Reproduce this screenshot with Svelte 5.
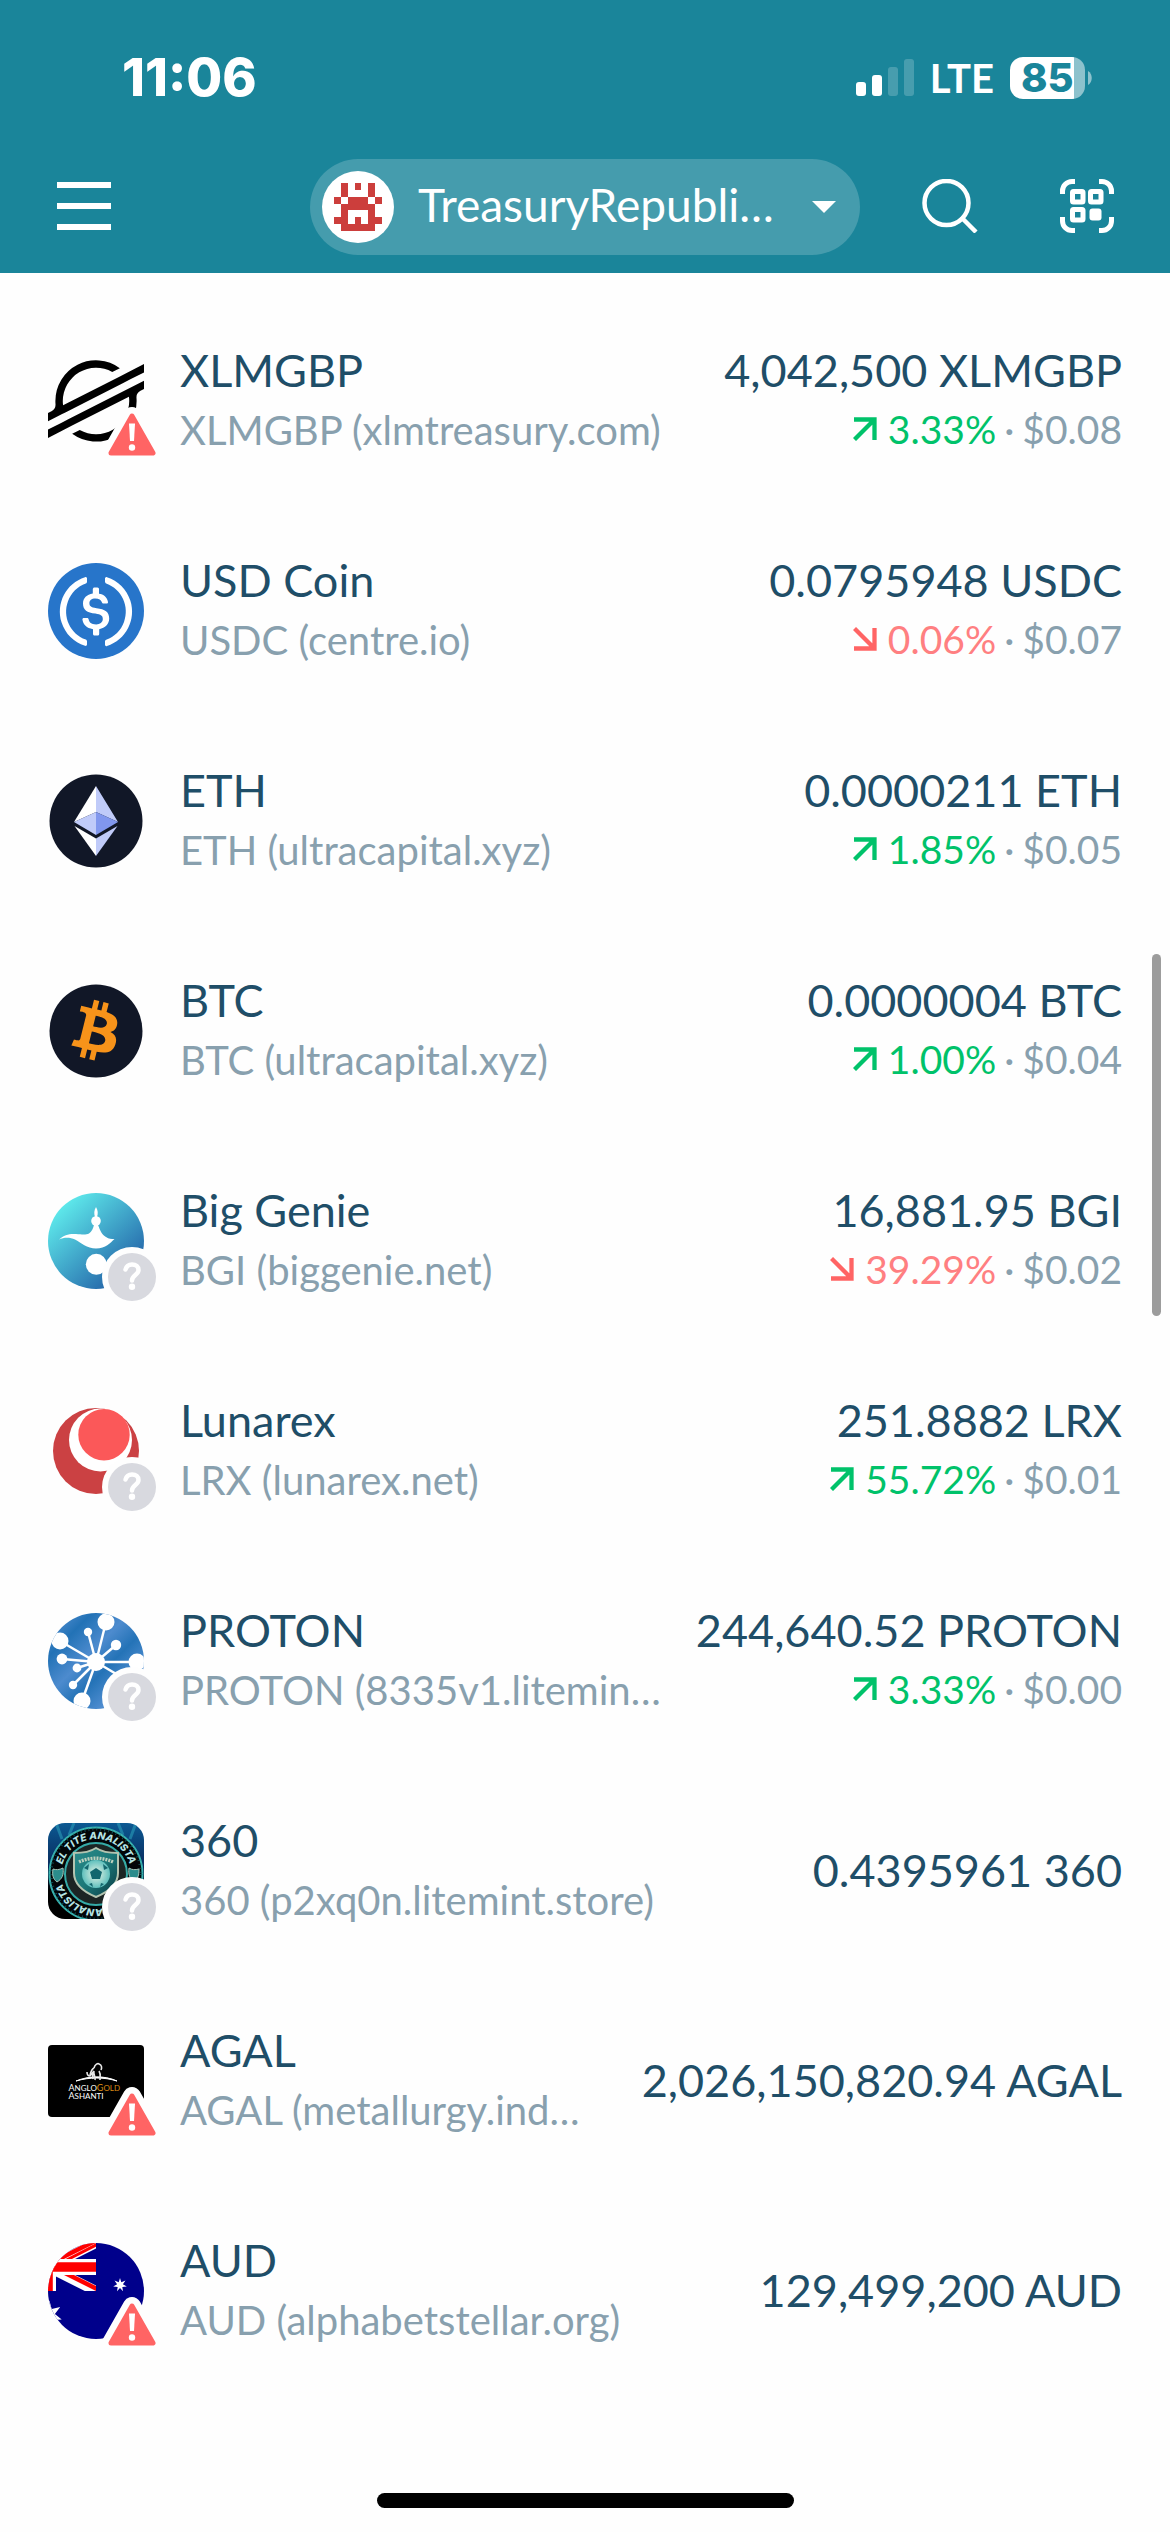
<script>
  const assets = [
    { icon: 'xlm', name: 'XLMGBP', sub: 'XLMGBP (xlmtreasury.com)', amount: '4,042,500 XLMGBP', dir: 'up', change: '3.33%', value: '$0.08', badge: 'warn' },
    { icon: 'usdc', name: 'USD Coin', sub: 'USDC (centre.io)', amount: '0.0795948 USDC', dir: 'down', change: '0.06%', value: '$0.07' },
    { icon: 'eth', name: 'ETH', sub: 'ETH (ultracapital.xyz)', amount: '0.0000211 ETH', dir: 'up', change: '1.85%', value: '$0.05' },
    { icon: 'btc', name: 'BTC', sub: 'BTC (ultracapital.xyz)', amount: '0.0000004 BTC', dir: 'up', change: '1.00%', value: '$0.04' },
    { icon: 'genie', name: 'Big Genie', sub: 'BGI (biggenie.net)', amount: '16,881.95 BGI', dir: 'down', change: '39.29%', value: '$0.02', badge: 'unknown' },
    { icon: 'lunarex', name: 'Lunarex', sub: 'LRX (lunarex.net)', amount: '251.8882 LRX', dir: 'up', change: '55.72%', value: '$0.01', badge: 'unknown' },
    { icon: 'proton', name: 'PROTON', sub: 'PROTON (8335v1.litemin…', amount: '244,640.52 PROTON', dir: 'up', change: '3.33%', value: '$0.00', badge: 'unknown' },
    { icon: 'shield', name: '360', sub: '360 (p2xq0n.litemint.store)', amount: '0.4395961 360', badge: 'unknown' },
    { icon: 'gold', name: 'AGAL', sub: 'AGAL (metallurgy.ind…', amount: '2,026,150,820.94 AGAL', badge: 'warn' },
    { icon: 'aud', name: 'AUD', sub: 'AUD (alphabetstellar.org)', amount: '129,499,200 AUD', badge: 'warn' }
  ];

  // Identicon, seven cells square
  const identicon = ['0101010', '0100010', '1011101', '0111110', '0100010', '1101011', '0111110'];
  const cells = identicon.flatMap((row, y) => [...row].flatMap((c, x) => (c === '1' ? [{ x, y }] : [])));

  // Satellites around the PROTON nucleus: x, y, radius
  const nodes = [
    [58, 9, 8.5], [40, 19, 4.2], [68, 32, 5.2], [12, 28, 8.5], [14, 46, 5.4],
    [29, 55, 4.4], [25, 72, 4.2], [34, 88, 8.5], [89, 49, 8.5], [80, 68, 6]
  ];

  function star(cx, cy, outer, inner, turn = 0) {
    return Array.from({ length: 14 }, (_, i) => {
      const r = i % 2 ? inner : outer;
      const a = (Math.PI * i) / 7 - Math.PI / 2 + turn;
      return `${(cx + r * Math.cos(a)).toFixed(1)},${(cy + r * Math.sin(a)).toFixed(1)}`;
    }).join(' ');
  }
</script>

{#snippet logo(kind)}
  <svg class="logo" viewBox="0 0 96 96" aria-hidden="true">
    {#if kind === 'xlm'}
      <svg y="7" width="96" height="82" viewBox="0 0 236.36 200">
        <path d="M203,26.16l-28.46,14.5-137.43,70a82.49,82.49,0,0,1-.7-10.69A81.87,81.87,0,0,1,158.2,28.6l16.29-8.3,2.43-1.24A100,100,0,0,0,18.18,100q0,3.82.29,7.61a18.19,18.19,0,0,1-9.88,17.58L0,129.57V150l25.29-12.89,8.19-4.18,8.07-4.11L186.43,55l16.28-8.29,33.65-17.15V9.14Z" />
        <path d="M236.36,50,49.78,145,33.5,153.31,0,170.38v20.41l33.27-16.95,28.46-14.5L199.3,89.24A83.45,83.45,0,0,1,200,100,81.87,81.87,0,0,1,78.09,171.36l-1,.53-17.66,9A100,100,0,0,0,218.18,100c0-2.57-.1-5.14-.29-7.68a18.2,18.2,0,0,1,9.87-17.58l8.6-4.38Z" />
      </svg>
    {:else if kind === 'usdc'}
      <svg width="96" height="96" viewBox="0 0 2000 2000">
        <circle cx="1000" cy="1000" r="1000" fill="#2775ca" />
        <path fill="#fff" d="M1275 1158.33c0-145.83-87.5-195.83-262.5-216.66-125-16.67-150-50-150-108.34s41.67-95.83 125-95.83c75 0 116.67 25 137.5 87.5 4.17 12.5 16.67 20.83 29.17 20.83h66.66c16.67 0 29.17-12.5 29.17-29.16v-4.17c-16.67-91.67-91.67-162.5-187.5-170.83v-100c0-16.67-12.5-29.17-33.33-33.34h-62.5c-16.67 0-29.17 12.5-33.34 33.34v95.83c-125 16.67-204.16 100-204.16 204.17 0 137.5 83.33 191.66 258.33 212.5 116.67 20.83 154.17 45.83 154.17 112.5s-58.34 112.5-137.5 112.5c-108.34 0-145.84-45.84-158.34-108.34-4.16-16.66-16.66-25-29.16-25h-70.84c-16.66 0-29.16 12.5-29.16 29.17v4.17c16.66 104.16 83.33 179.16 220.83 200v100c0 16.66 12.5 29.16 33.33 33.33h62.5c16.67 0 29.17-12.5 33.34-33.33v-100c125-20.84 208.33-108.34 208.33-220.84z" />
        <path fill="#fff" d="M787.5 1595.83c-325-116.66-491.67-479.16-370.83-800 62.5-175 200-308.33 370.83-370.83 16.67-8.33 25-20.83 25-41.67V325c0-16.67-8.33-29.17-25-33.33-4.17 0-12.5 0-16.67 4.16-395.83 125-612.5 545.84-487.5 941.67 75 233.33 254.17 412.5 487.5 487.5 16.67 8.33 33.34 0 37.5-16.67 4.17-4.16 4.17-8.33 4.17-16.66v-58.34c0-12.5-12.5-29.16-25-37.5zM1229.17 295.83c-16.67-8.33-33.34 0-37.5 16.67-4.17 4.17-4.17 8.33-4.17 16.67v58.33c0 16.67 12.5 33.33 25 41.67 325 116.66 491.67 479.16 370.83 800-62.5 175-200 308.33-370.83 370.83-16.67 8.33-25 20.83-25 41.67V1700c0 16.67 8.33 29.17 25 33.33 4.17 0 12.5 0 16.67-4.16 395.83-125 612.5-545.84 487.5-941.67-75-237.5-258.34-416.67-487.5-491.67z" />
      </svg>
    {:else if kind === 'eth'}
      <circle cx="48" cy="48" r="46.5" fill="#111727" />
      <path fill="#fff" d="M48 13 26 49l22-10z" />
      <path fill="#c0cbf9" d="M48 13v26l22 10zM48 39 26 49l22 13z" />
      <path fill="#8197ee" d="M48 39v23l22-13z" />
      <path fill="#fff" d="M26.500 53 48 65.500V83z" />
      <path fill="#c0cbf9" d="M69.500 53 48 65.500V83z" />
    {:else if kind === 'btc'}
      <circle cx="48" cy="48" r="46.5" fill="#111727" />
      <svg width="96" height="96" viewBox="0 0 64 64">
        <path fill="#f7931a" d="M46.103 27.444c.637-4.258-2.605-6.547-7.038-8.074l1.438-5.768-3.511-.875-1.4 5.616c-.923-.23-1.871-.447-2.813-.662l1.41-5.653-3.509-.875-1.439 5.766c-.764-.174-1.514-.346-2.242-.527l.004-.018-4.842-1.209-.934 3.75s2.605.597 2.55.634c1.422.355 1.679 1.296 1.636 2.042l-1.638 6.571-2.302 9.230c-.174.432-.615 1.080-1.609.834.035.051-2.552-.637-2.552-.637l-1.743 4.019 4.569 1.139c.85.213 1.683.436 2.503.646l-1.453 5.834 3.507.875 1.439-5.772c.958.26 1.888.5 2.798.726l-1.434 5.745 3.511.875 1.453-5.823c5.987 1.133 10.489.676 12.384-4.739 1.527-4.36-.076-6.875-3.226-8.515 2.294-.529 4.022-2.038 4.483-5.155zM38.081 38.693c-1.085 4.36-8.426 2.003-10.806 1.412l1.928-7.729c2.38.594 10.012 1.77 8.878 6.317zm1.086-11.312c-.99 3.966-7.1 1.951-9.082 1.457l1.748-7.01c1.982.494 8.365 1.416 7.334 5.553z" />
      </svg>
    {:else if kind === 'genie'}
      <defs>
        <linearGradient id="genie-sky" x1="0.15" y1="0.15" x2="0.8" y2="0.85">
          <stop offset="0" stop-color="#5de7ea" />
          <stop offset="1" stop-color="#2567aa" />
        </linearGradient>
      </defs>
      <circle cx="48" cy="48" r="48" fill="url(#genie-sky)" />
      <g fill="#fff">
        <path d="M48 14c2 3 2.200 7 1 10h-2c-1.200-3-1-7 1-10z" />
        <circle cx="48" cy="28" r="4.800" />
        <path d="M46 32h4c2 5 4 10 8 12 3 2 5 2 8.500 2C62 50 58 55.500 48 55.500c-9 0-15-6-21-9-5-2.500-11-2.500-16 0 5-5 11-6 17-5.500 6 .500 10 1 13-.500 3-2 4-5 5-8.500z" />
        <circle cx="48.300" cy="71.300" r="10.500" />
      </g>
    {:else if kind === 'lunarex'}
      <circle cx="48" cy="48" r="43" fill="#cb4143" />
      <circle cx="52.500" cy="37" r="31.500" fill="#fff" />
      <circle cx="56" cy="31.700" r="25.700" fill="#fb5859" />
    {:else if kind === 'proton'}
      <defs>
        <clipPath id="proton-disc"><circle cx="48" cy="48" r="48" /></clipPath>
        <linearGradient id="proton-sheen" x1="0" y1="0.1" x2="0.9" y2="1">
          <stop offset="0" stop-color="#5590d2" />
          <stop offset="0.2" stop-color="#2272b6" />
          <stop offset="0.42" stop-color="#4d8bce" />
          <stop offset="0.6" stop-color="#2473b7" />
          <stop offset="0.8" stop-color="#4f8dd0" />
          <stop offset="1" stop-color="#2473b7" />
        </linearGradient>
      </defs>
      <g clip-path="url(#proton-disc)">
        <rect width="96" height="96" fill="url(#proton-sheen)" />
        {#each nodes as [x, y, r]}
          <path d="M48 49 {x} {y}" stroke="#fff" stroke-width="2.500" />
          <circle cx={x} cy={y} {r} fill="#fff" />
        {/each}
        <circle cx="48" cy="49" r="9" fill="#fff" />
      </g>
    {:else if kind === 'shield'}
      <defs>
        <clipPath id="tile"><rect width="96" height="96" rx="17" /></clipPath>
        <linearGradient id="tile-night" x1="0" y1="0" x2="0" y2="1">
          <stop offset="0" stop-color="#0d5a93" />
          <stop offset="0.45" stop-color="#082a5c" />
          <stop offset="0.7" stop-color="#000" />
        </linearGradient>
        <linearGradient id="shield-metal" x1="0" y1="0" x2="1" y2="1">
          <stop offset="0" stop-color="#2b8c8c" />
          <stop offset="0.5" stop-color="#1b7878" />
          <stop offset="1" stop-color="#0a3b44" />
        </linearGradient>
        <radialGradient id="ball-shine">
          <stop offset="0" stop-color="#e9f4e6" />
          <stop offset="1" stop-color="#5fc0bd" />
        </radialGradient>
        <path id="arc-top" d="M13 51a35 35 0 0 1 70 0" />
        <path id="arc-bottom" d="M83 51a35 35 0 0 1-70 0" />
      </defs>
      <g clip-path="url(#tile)">
        <rect width="96" height="96" fill="url(#tile-night)" />
        <path d="m8 0 6 16M26 0l-5 12M70 0l5 12M88 0l-6 16" stroke="#2a9bb8" stroke-width="3" opacity="0.6" />
        <circle cx="48" cy="51" r="46.500" fill="#020608" stroke="#38b3b0" stroke-width="2" />
        <circle cx="48" cy="51" r="45" fill="none" stroke="#1a6b72" stroke-width="3" stroke-dasharray="1 3" opacity="0.7" />
        <text class="arc"><textPath href="#arc-top" startOffset="50%" text-anchor="middle">EL TITE ANALISTA</textPath></text>
        <text class="arc"><textPath href="#arc-bottom" startOffset="50%" text-anchor="middle">EL TITE ANALISTA</textPath></text>
        <circle cx="48" cy="51" r="31" fill="#1c2524" stroke="#35aaa6" stroke-width="2" />
        <path d="M48 25c6 4 14 5 22 5v20c0 11-10 19-22 24-12-5-22-13-22-24V30c8 0 16-1 22-5z" fill="url(#shield-metal)" stroke="#b3c4b0" stroke-width="2" />
        <path d="M31 39c11-5 23-5 34 0" fill="none" stroke="#bcd0be" stroke-width="3.500" stroke-dasharray="2 1" />
        <path d="M5 46c3 1 6 1 10-1 1 7-1 11-6 14-4-3-5-7-4-13zM81 45c3 2 6 2 10 1 0 6-1 10-5 13-4-3-6-7-5-14z" fill="#2b8c8c" stroke="#a5c5b8" stroke-width="1" />
        <circle cx="48" cy="51" r="14" fill="url(#ball-shine)" />
        <path d="m48 45 6 4-2 7h-8l-2-7zM36 45l4 2 1-6zM60 45l-4 2-1-6zM41 61l3-1 1 4zM56 61l-3-1-1 4z" fill="#13666e" />
      </g>
    {:else if kind === 'gold'}
      <rect y="12" width="96" height="72" rx="4" />
      <path d="M28 48c12-5 28-6 41 0-13-4-27-4-41 0z" fill="#fff" stroke="#fff" />
      <path d="M45 46c-1-3 0-6 1-8l-4 5c-2 0-3-2-3-4m3 3c1-4 2-6 4-7m0 0c1-4 4-5 5-4 3 1 3 4 2 6m-2 1c2 3 1 6 1 9m-6-9c-1 4 2 6 1 9" fill="none" stroke="#e8e8e8" stroke-width="1.600" />
      <text class="mark" x="20.500" y="58">A<tspan class="small">NGLO</tspan><tspan class="amber">G</tspan><tspan class="small amber">OLD</tspan></text>
      <text class="mark" x="20.500" y="66">A<tspan class="small">SHANTI</tspan></text>
    {:else if kind === 'aud'}
      <defs>
        <clipPath id="aud-disc"><circle cx="48" cy="48" r="48" /></clipPath>
        <clipPath id="aud-canton"><rect width="48" height="48" /></clipPath>
      </defs>
      <g clip-path="url(#aud-disc)">
        <rect width="96" height="96" fill="#00008b" />
        <g clip-path="url(#aud-canton)">
          <path d="M0 24 48 0M0 24l48 24" stroke="#fff" stroke-width="10" />
          <path d="M0 24 48 0v-5L0 19zM0 24l48 24v-5L0 19z" fill="#f00" />
          <path d="M9 22 50 1" stroke="#f00" stroke-width="3" />
          <path d="M0 24h48M0 0v48" stroke="#fff" stroke-width="16" />
          <path d="M0 24h48M0 0v48" stroke="#f00" stroke-width="9.600" />
        </g>
        <polygon points={star(72, 42, 7, 3)} fill="#fff" />
        <polygon points={star(0, 72, 14.500, 7, 0.1)} fill="#fff" />
      </g>
    {/if}
  </svg>
{/snippet}

{#snippet marker(kind)}
  <svg class="marker" viewBox="0 0 60 60" role="img" aria-label={kind === 'warn' ? 'Warning' : 'Unverified'}>
    {#if kind === 'warn'}
      <path d="m30 9 21 37H9z" fill="#fefefe" stroke="#fefefe" stroke-width="18" stroke-linejoin="round" />
      <path d="m30 9 21 37H9z" fill="#ff6464" stroke="#ff6464" stroke-width="5" stroke-linejoin="round" />
      <path d="M27 16.500h6l-1 17.500h-4z" fill="#fff" />
      <circle cx="30" cy="40.500" r="3.200" fill="#fff" />
    {:else}
      <circle cx="30" cy="30" r="30" fill="#fefefe" />
      <circle cx="30" cy="30" r="24" fill="#d8d9df" />
      <path d="M23.500 22.500c1-3.500 3.500-5 6.500-5 4 0 6.500 2.300 6.500 5.500 0 5-6.500 5-6.500 10.500" fill="none" stroke="#fff" stroke-width="4.500" stroke-linecap="round" />
      <circle cx="30" cy="39.700" r="3.200" fill="#fff" />
    {/if}
  </svg>
{/snippet}

<div class="page">
  <header>
    <div class="status">
      <span class="time">11:06</span>
      <div class="radio">
        <svg width="58" height="38" viewBox="0 0 58 38" role="img" aria-label="Signal, two of four bars">
          <g fill="#fff">
            <rect y="23" width="10" height="14" rx="3" />
            <rect x="16" y="16" width="10" height="21" rx="3" />
            <rect x="32" y="8" width="10" height="29" rx="3" opacity="0.2" />
            <rect x="48" width="10" height="37" rx="3" opacity="0.2" />
          </g>
        </svg>
        <span class="lte">LTE</span>
        <div class="power">
          <span class="cell">85</span>
          <svg width="4" height="14" viewBox="0 0 4 14" aria-hidden="true"><path d="M0 0c5 3 5 11 0 14z" fill="#fff" opacity="0.5" /></svg>
        </div>
      </div>
    </div>

    <nav aria-label="Main">
      <button class="tool menu" aria-label="Menu">
        <svg width="54" height="54" viewBox="0 0 54 54"><path d="M0 6h54M0 27h54M0 48h54" stroke="#fff" stroke-width="6" /></svg>
      </button>
      <button class="account" aria-haspopup="listbox">
        <svg class="avatar" viewBox="0 0 72 72" shape-rendering="crispEdges" aria-hidden="true">
          <circle cx="36" cy="36" r="36" fill="#fff" shape-rendering="auto" />
          {#each cells as c}
            <rect x={12 + (c.x * 48) / 7} y={12 + (c.y * 48) / 7} width={48 / 7} height={48 / 7} fill="#cc3e3c" />
          {/each}
        </svg>
        <span class="owner">TreasuryRepubli…</span>
        <svg width="24" height="12" viewBox="0 0 24 12" aria-hidden="true"><path d="M0 0h24L12 12z" fill="#fff" /></svg>
      </button>
      <div class="actions">
        <button class="tool" aria-label="Search">
          <svg width="56" height="54" viewBox="0 0 56 54" fill="none" stroke="#fff" stroke-width="4.500">
            <circle cx="24.500" cy="24" r="22" />
            <path d="m39 38 15 15" />
          </svg>
        </button>
        <button class="tool" aria-label="Scan code">
          <svg width="54" height="54" viewBox="0 0 54 54" fill="none" stroke="#fff" stroke-width="5">
            <path d="M2.500 15v-3a9.500 9.500 0 0 1 9.500-9.500h3M39 2.500h3a9.500 9.500 0 0 1 9.500 9.500v3M51.500 38v4a9.500 9.500 0 0 1-9.500 9.500h-3M15 51.500h-3A9.500 9.500 0 0 1 2.500 42v-4" />
            <rect x="12.500" y="12.500" width="10.500" height="10.500" rx="1" />
            <rect x="30.500" y="12.500" width="10.500" height="10.500" rx="1" />
            <rect x="12.500" y="30.500" width="10.500" height="10.500" rx="1" />
            <rect x="29.500" y="29.500" width="12" height="12" rx="3" fill="#fff" stroke="none" />
          </svg>
        </button>
      </div>
    </nav>
  </header>

  <main>
    <ul>
      {#each assets as a}
        <li>
          <button class="row">
            <span class="token">
              {@render logo(a.icon)}
              {#if a.badge}{@render marker(a.badge)}{/if}
            </span>
            <span class="info">
              <span class="name">{a.name}</span>
              <span class="sub">{a.sub}</span>
            </span>
            <span class="figures">
              <span class="amount">{a.amount}</span>
              {#if a.change}
                <span class="quote">
                  <span class="change {a.dir}">
                    <svg width="24" height="24" viewBox="0 0 24 24" fill="none" stroke="currentColor" stroke-width="4.300" aria-hidden="true">
                      {#if a.dir === 'up'}
                        <path d="M1 2.500h20.500V23M21 3 1.500 22.500" />
                      {:else}
                        <path d="M21.500 1v20.500H1M1.500 1.500 21 21" />
                      {/if}
                    </svg>
                    <span class="pct">{a.change}</span>
                  </span>
                  <span>·</span>
                  <span>{a.value}</span>
                </span>
              {/if}
            </span>
          </button>
        </li>
      {/each}
    </ul>
  </main>

  <div class="scrollbar"></div>
  <div class="home"></div>
</div>

<style>
  :global(body) {
    background: #fefefe;
  }
  .page {
    min-height: 100vh;
    box-sizing: border-box;
    font-family: Lato, 'Open Sans', sans-serif;
    color: #1f4e68;
    background: #fefefe;
  }
  button {
    margin: 0;
    padding: 0;
    border: 0;
    background: none;
    font: inherit;
    color: inherit;
    cursor: pointer;
  }
  svg {
    display: block;
    flex: none;
  }
  header {
    background: #1a859a;
    color: #fff;
    padding-bottom: 18px;
  }
  .status {
    display: flex;
    align-items: center;
    justify-content: space-between;
    height: 159px;
    padding: 0 78px 4px 122px;
    box-sizing: border-box;
  }
  .time {
    font: 800 52px/60px Inter, sans-serif;
  }
  .radio {
    display: flex;
    align-items: center;
    gap: 16px;
  }
  .lte {
    font-size: 40px;
    line-height: 48px;
    font-weight: 700;
  }
  .power {
    display: flex;
    align-items: center;
    gap: 3px;
  }
  .cell {
    width: 75px;
    box-sizing: border-box;
    padding-left: 11px;
    border-radius: 13px;
    background: linear-gradient(to right, #fff 85%, rgba(255, 255, 255, 0.5) 85%);
    color: #1a859a;
    font: 800 40px/42px Inter, sans-serif;
  }
  nav {
    display: grid;
    grid-template-columns: 1fr 47% 1fr;
    align-items: center;
  }
  .tool {
    padding-bottom: 3px;
  }
  .menu {
    justify-self: start;
    margin-left: 57px;
  }
  .account {
    display: flex;
    align-items: center;
    height: 96px;
    padding: 0 24px 0 12px;
    border-radius: 48px;
    background: rgba(255, 255, 255, 0.19);
    text-align: left;
  }
  .avatar {
    width: 72px;
    height: 72px;
  }
  .owner {
    flex: 1;
    min-width: 0;
    padding: 0 0 4px 24px;
    font-size: 46px;
    line-height: 58px;
    white-space: nowrap;
  }
  .actions {
    display: flex;
    justify-content: flex-end;
    gap: 82px;
    padding-right: 56px;
  }
  ul {
    list-style: none;
    margin: 0;
    padding: 23px 0 120px;
  }
  .row {
    display: flex;
    align-items: center;
    width: 100%;
    height: 210px;
    padding: 0 48px;
    gap: 36px;
    text-align: left;
  }
  .token {
    position: relative;
    flex: none;
  }
  .logo {
    width: 96px;
    height: 96px;
  }
  .marker {
    position: absolute;
    right: -18px;
    bottom: -18px;
    width: 60px;
    height: 60px;
    overflow: visible;
  }
  .info {
    flex: 1;
    min-width: 0;
    display: flex;
    flex-direction: column;
    white-space: nowrap;
  }
  .name,
  .amount {
    font-size: 45px;
    line-height: 58px;
  }
  .sub {
    font-size: 40px;
    line-height: 62px;
    color: #88a0ae;
  }
  .figures {
    display: flex;
    flex-direction: column;
    align-items: flex-end;
    padding-bottom: 2px;
    white-space: nowrap;
  }
  .quote {
    display: flex;
    align-items: center;
    gap: 8px;
    font-size: 39px;
    line-height: 60px;
    color: #88a0ae;
  }
  .change {
    display: flex;
    align-items: center;
    gap: 11px;
  }
  .up {
    color: #00c26a;
  }
  .down {
    color: #ff6464;
  }
  .down .pct {
    color: #ff7f81;
  }
  .arc {
    font: italic 800 10px Inter, sans-serif;
    fill: #b5e3e4;
  }
  .mark {
    font: 9px Lato, sans-serif;
    fill: #fff;
  }
  .small {
    font-size: 8px;
  }
  .amber {
    fill: #d98a14;
  }
  .scrollbar {
    position: fixed;
    top: 954px;
    right: 9px;
    width: 9px;
    height: 362px;
    border-radius: 5px;
    background: #9c9c9c;
  }
  .home {
    position: fixed;
    bottom: 24px;
    left: 50%;
    width: 417px;
    height: 15px;
    margin-left: -208px;
    border-radius: 8px;
    background: #000;
  }
</style>
